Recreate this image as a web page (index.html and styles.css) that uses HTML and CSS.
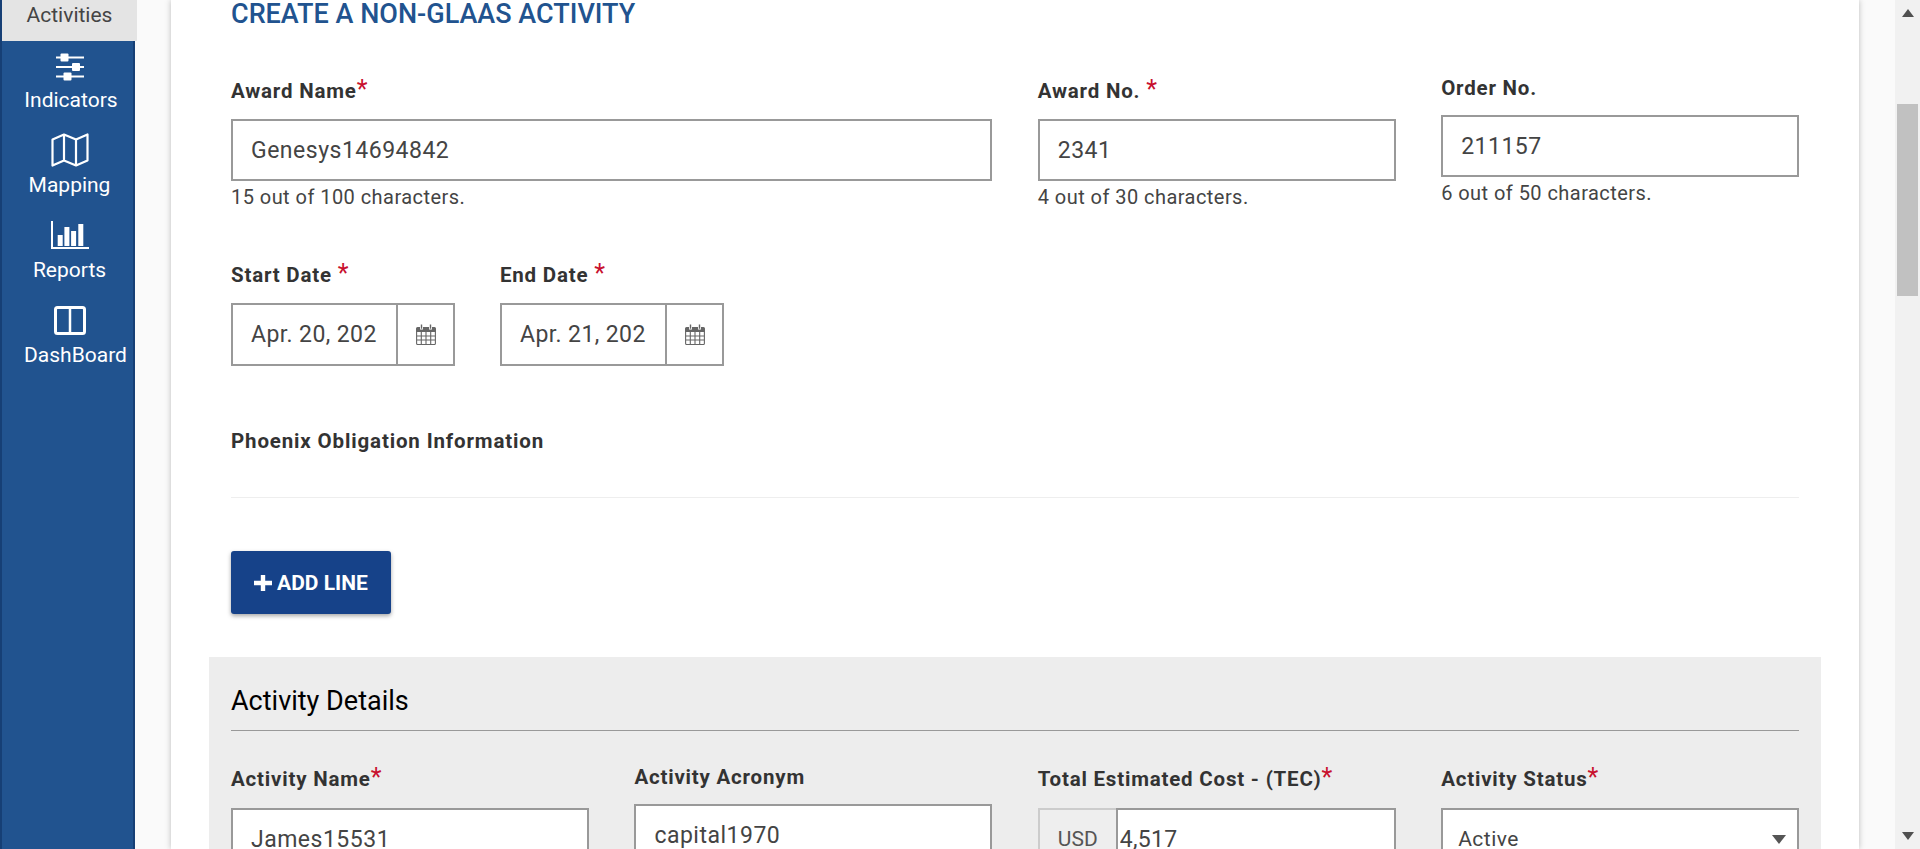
FILE: index.html
```html
<!DOCTYPE html>
<html lang="en">
<head>
    <meta charset="UTF-8" />
    <meta name="viewport" content="width=device-width, initial-scale=1" />
    <title>Create a Non-GLAAS Activity</title>
    <link rel="stylesheet" href="styles.css">
</head>
<body>
    <div class="page">
        <nav class="sidebar">
            <a class="nav-tab">Activities</a>
            <a class="nav-item">
                <svg class="nav-icon" width="28" height="28" viewBox="0 0 28 28">
                    <path d="M0 4.500h28M0 14h28M0 23.500h28" stroke="#fff" stroke-width="2" fill="none"/>
                    <rect x="4.500" y="0.500" width="8" height="8" rx="1" fill="#fff"/>
                    <rect x="16" y="10" width="8" height="8" rx="1" fill="#fff"/>
                    <rect x="7.500" y="19.500" width="8" height="8" rx="1" fill="#fff"/>
                </svg>
                <span class="nav-label nav-label-shift">Indicators</span>
            </a>
            <a class="nav-item">
                <svg class="nav-icon" width="38" height="34" viewBox="0 0 38 34">
                    <path d="M1.500 6.500 13 1.500l12 5 11.500-5v26L25 32.500l-12-5-11.500 5zM13 1.500v26M25 6.500v26" stroke="#fff" stroke-width="2.200" fill="none" stroke-linejoin="round"/>
                </svg>
                <span class="nav-label">Mapping</span>
            </a>
            <a class="nav-item">
                <svg class="nav-icon" width="38" height="29" viewBox="0 0 38 29">
                    <path d="M1 0v27h37" stroke="#fff" stroke-width="2" fill="none"/>
                    <path d="M6.700 14h5v11h-5zM13.400 6h5v19h-5zM20.100 10h5v15h-5zM27.300 3h5v22h-5z" fill="#fff"/>
                </svg>
                <span class="nav-label">Reports</span>
            </a>
            <a class="nav-item">
                <svg class="nav-icon" width="32" height="29" viewBox="0 0 32 29">
                    <rect x="1.500" y="1.500" width="29" height="26" rx="2" stroke="#fff" stroke-width="3" fill="none"/>
                    <path d="M16 2v25" stroke="#fff" stroke-width="2.500"/>
                </svg>
                <span class="nav-label nav-label-wide">DashBoard</span>
            </a>
        </nav>

        <main class="content">
            <div class="card">
                <section class="intro">
                    <h2 class="page-title">CREATE A NON-GLAAS ACTIVITY</h2>

                    <div class="form-row award-row">
                        <div class="field span-2">
                            <label class="field-label req">Award Name<span class="star">*</span></label>
                            <input class="text-input" type="text" value="Genesys14694842" />
                            <div class="help">15 out of 100 characters.</div>
                        </div>
                        <div class="field">
                            <label class="field-label req">Award No. <span class="star">*</span></label>
                            <input class="text-input" type="text" value="2341" />
                            <div class="help">4 out of 30 characters.</div>
                        </div>
                        <div class="field">
                            <label class="field-label">Order No.</label>
                            <input class="text-input" type="text" value="211157" />
                            <div class="help">6 out of 50 characters.</div>
                        </div>
                    </div>

                    <div class="date-row">
                        <div class="field">
                            <label class="field-label req">Start Date <span class="star">*</span></label>
                            <div class="date-box">
                                <input class="date-input" type="text" value="Apr. 20, 2021" />
                                <span class="date-btn">
                                    <svg width="20" height="21" viewBox="0 0 20 21">
                                        <path d="M1.500 3h2.500v2.500h3V3h6v2.500h3V3h2.500A1.500 1.500 0 0 1 20 4.500V8H0V4.500A1.500 1.500 0 0 1 1.500 3zM4.800 0.500h1.400v4.200H4.800zM13.800 0.500h1.400v4.200h-1.400z" fill="#666"/>
                                        <path d="M0.600 8v11.500a1 1 0 0 0 1 1h16.800a1 1 0 0 0 1-1V8M5.300 8v12.500M10 8v12.500M14.700 8v12.500M0.600 12h18.800M0.600 16h18.800" stroke="#666" stroke-width="1.100" fill="none"/>
                                    </svg>
                                </span>
                            </div>
                        </div>
                        <div class="field">
                            <label class="field-label req">End Date <span class="star">*</span></label>
                            <div class="date-box">
                                <input class="date-input" type="text" value="Apr. 21, 2021" />
                                <span class="date-btn">
                                    <svg width="20" height="21" viewBox="0 0 20 21">
                                        <path d="M1.500 3h2.500v2.500h3V3h6v2.500h3V3h2.500A1.500 1.500 0 0 1 20 4.500V8H0V4.500A1.500 1.500 0 0 1 1.500 3zM4.800 0.500h1.400v4.200H4.800zM13.800 0.500h1.400v4.200h-1.400z" fill="#666"/>
                                        <path d="M0.600 8v11.500a1 1 0 0 0 1 1h16.800a1 1 0 0 0 1-1V8M5.300 8v12.500M10 8v12.500M14.700 8v12.500M0.600 12h18.800M0.600 16h18.800" stroke="#666" stroke-width="1.100" fill="none"/>
                                    </svg>
                                </span>
                            </div>
                        </div>
                    </div>

                    <div class="phoenix-title">Phoenix Obligation Information</div>
                    <hr class="soft-rule" />

                    <button class="add-btn" type="button">
                        <svg width="18" height="16" viewBox="0 0 18 16">
                            <path d="M6.800 0h4.400v5.800H18v4.400h-6.800V16H6.800v-5.800H0V5.800h6.800z" fill="#fff"/>
                        </svg>
                        ADD LINE
                    </button>
                </section>

                <section class="details">
                    <h3 class="details-title">Activity Details</h3>
                    <div class="form-row">
                        <div class="field">
                            <label class="field-label req">Activity Name<span class="star">*</span></label>
                            <input class="text-input" type="text" value="James15531" />
                        </div>
                        <div class="field">
                            <label class="field-label">Activity Acronym</label>
                            <input class="text-input" type="text" value="capital1970" />
                        </div>
                        <div class="field">
                            <label class="field-label req">Total Estimated Cost - (TEC)<span class="star">*</span></label>
                            <div class="money-box">
                                <span class="money-unit">USD</span>
                                <input class="money-input" type="text" value="4,517" />
                            </div>
                        </div>
                        <div class="field">
                            <label class="field-label req">Activity Status<span class="star">*</span></label>
                            <div class="select-box">
                                <select class="status-select">
                                    <option>Active</option>
                                    <option>Inactive</option>
                                </select>
                                <span class="select-arrow"></span>
                            </div>
                        </div>
                    </div>
                </section>
            </div>
        </main>

        <div class="scrollbar">
            <span class="scroll-arrow up"></span>
            <div class="scroll-track"><div class="scroll-thumb"></div></div>
            <span class="scroll-arrow down"></span>
        </div>
    </div>
</body>
</html>
```

FILE: styles.css
```css
* {
    box-sizing: border-box;
}
html, body {
    height: 100%;
}
body {
    margin: 0;
    font-family: Roboto, "Liberation Sans", sans-serif;
    color: #333;
    overflow: hidden;
}
.page {
    display: flex;
    height: 849px;
    overflow: hidden;
}

/* left nav */
.sidebar {
    flex: 0 0 135px;
    width: 135px;
    min-width: 0;
    background: #21538f;
    border-left: 2px solid #163f75;
    border-right: 2px solid #163f75;
    color: #fff;
}
.nav-tab {
    display: block;
    width: 135px;
    height: 41px;
    background: #e4e4e4;
    color: #444;
    font-size: 21px;
    line-height: 30px;
    text-align: center;
    position: relative;
    z-index: 1;
}
.nav-item {
    display: flex;
    flex-direction: column;
    align-items: center;
    height: 85px;
    padding-left: 4px;
}
.nav-item:nth-child(2) {
    padding-top: 12px;
    height: 93px;
}
.nav-icon {
    display: block;
    flex: none;
}
.nav-label {
    font-size: 21px;
    line-height: 24px;
    margin-top: 7px;
    white-space: nowrap;
}
.nav-item:nth-child(3) .nav-icon {
    margin-top: -1px;
}
.nav-item:nth-child(3) .nav-label {
    margin-top: 6px;
}
.nav-item:nth-child(4) {
    padding-top: 2px;
}
.nav-item:nth-child(4) .nav-label {
    margin-top: 8px;
}
.nav-item:nth-child(5) {
    padding-top: 2px;
}
.nav-item:nth-child(5) .nav-label {
    margin-top: 8px;
}
.nav-label-shift {
    padding-left: 3px;
}
.nav-label-wide {
    padding-left: 12px;
}

/* main card */
.content {
    flex: 1;
    min-width: 0;
    background: #fafafa;
    padding: 0 36px;
}
.card {
    background: #fff;
    width: 1688px;
    height: 849px;
    padding: 0 38px;
    box-shadow: 0 0 6px rgba(0, 0, 0, 0.25);
}
.intro {
    padding: 0 22px;
    height: 657px;
}
.page-title {
    margin: 0;
    font-size: 27px;
    font-weight: 500;
    line-height: 28px;
    color: #21538f;
}
.form-row {
    display: grid;
    grid-template-columns: repeat(4, minmax(0, 1fr));
    column-gap: 45.5px;
    align-items: start;
}
.award-row {
    margin-top: 45px;
}
.span-2 {
    grid-column: span 2;
}
.field-label {
    display: block;
    height: 30px;
    margin-bottom: 12px;
    font-size: 20.500px;
    font-weight: 700;
    line-height: 30px;
    letter-spacing: 0.8px;
    color: #333;
    white-space: nowrap;
}
.field-label.req {
    height: 34px;
    line-height: 35px;
}
.intro .field-label.req {
    line-height: 37px;
}
.star {
    color: #c8102e;
    font-size: 25px;
    font-weight: 400;
    line-height: 1;
}
.text-input {
    display: block;
    width: 100%;
    height: 62px;
    padding: 1px 18px 0;
    border: 2px solid #999;
    border-radius: 0;
    background: #fff;
    font-family: inherit;
    font-size: 23px;
    color: #444;
    letter-spacing: 0.5px;
    outline: none;
}
.help {
    margin-top: 4px;
    font-size: 20px;
    line-height: 24px;
    color: #444;
    letter-spacing: 0.45px;
}

/* dates */
.date-row {
    display: flex;
    gap: 45px;
    margin-top: 48px;
}
.date-box {
    display: flex;
    width: 224px;
    height: 63px;
    border: 2px solid #999;
    background: #fff;
}
.date-input {
    width: 165px;
    height: 100%;
    padding: 0 18px;
    border: 0;
    border-right: 2px solid #999;
    font-family: inherit;
    font-size: 23px;
    color: #444;
    letter-spacing: 0.4px;
    outline: none;
}
.date-btn {
    flex: 1;
    display: flex;
    align-items: center;
    justify-content: center;
}
.phoenix-title {
    margin-top: 60px;
    font-size: 20.500px;
    font-weight: 700;
    line-height: 30px;
    letter-spacing: 0.85px;
    color: #333;
}
.soft-rule {
    margin: 41px 0 0;
    border: 0;
    border-top: 1px solid #eee;
}
.add-btn {
    display: flex;
    align-items: center;
    justify-content: center;
    gap: 5px;
    width: 160px;
    height: 63px;
    margin-top: 53px;
    border: 0;
    border-radius: 3px;
    background: #164289;
    color: #fff;
    font-family: inherit;
    font-size: 21px;
    font-weight: 700;
    box-shadow: 0 2px 4px rgba(0, 0, 0, 0.35);
}

/* grey panel */
.details {
    background: #ededed;
    height: 192px;
    padding: 0 22px;
}
.details-title {
    height: 74px;
    margin: 0 0 31px;
    padding-top: 26px;
    border-bottom: 1px solid #999;
    font-size: 27px;
    font-weight: 400;
    line-height: 36px;
    color: #000;
}
.money-box {
    display: flex;
    height: 62px;
}
.money-unit {
    flex: 0 0 78px;
    display: flex;
    align-items: center;
    justify-content: center;
    background: #eee;
    border: 2px solid #ccc;
    border-right: 0;
    font-size: 21px;
    color: #555;
}
.money-input {
    flex: 1;
    min-width: 0;
    padding: 0 2px;
    border: 2px solid #999;
    background: #fff;
    font-family: inherit;
    font-size: 23px;
    color: #444;
    letter-spacing: 0.3px;
    outline: none;
}
.select-box {
    position: relative;
    height: 62px;
}
.status-select {
    appearance: none;
    width: 100%;
    height: 100%;
    padding: 0 15px;
    border: 2px solid #999;
    border-radius: 0;
    background: #fff;
    font-family: inherit;
    font-size: 21px;
    color: #444;
    letter-spacing: 0.5px;
    outline: none;
}
.select-arrow {
    position: absolute;
    right: 13px;
    top: 27px;
    border-left: 7px solid transparent;
    border-right: 7px solid transparent;
    border-top: 9px solid #555;
}

/* fake window scrollbar */
.scrollbar {
    flex: 0 0 25px;
    display: flex;
    flex-direction: column;
    align-items: center;
    background: #f1f1f1;
}
.scroll-track {
    flex: 1;
    width: 100%;
    padding: 0 2px;
}
.scroll-thumb {
    height: 192px;
    margin-top: 79px;
    background: #c1c1c1;
}
.scroll-arrow {
    flex: none;
    width: 0;
    height: 0;
    border-left: 6px solid transparent;
    border-right: 6px solid transparent;
}
.scroll-arrow.up {
    margin: 9px 0 8px;
    border-bottom: 8px solid #505050;
}
.scroll-arrow.down {
    margin: 8px 0 9px;
    border-top: 8px solid #505050;
}
```
